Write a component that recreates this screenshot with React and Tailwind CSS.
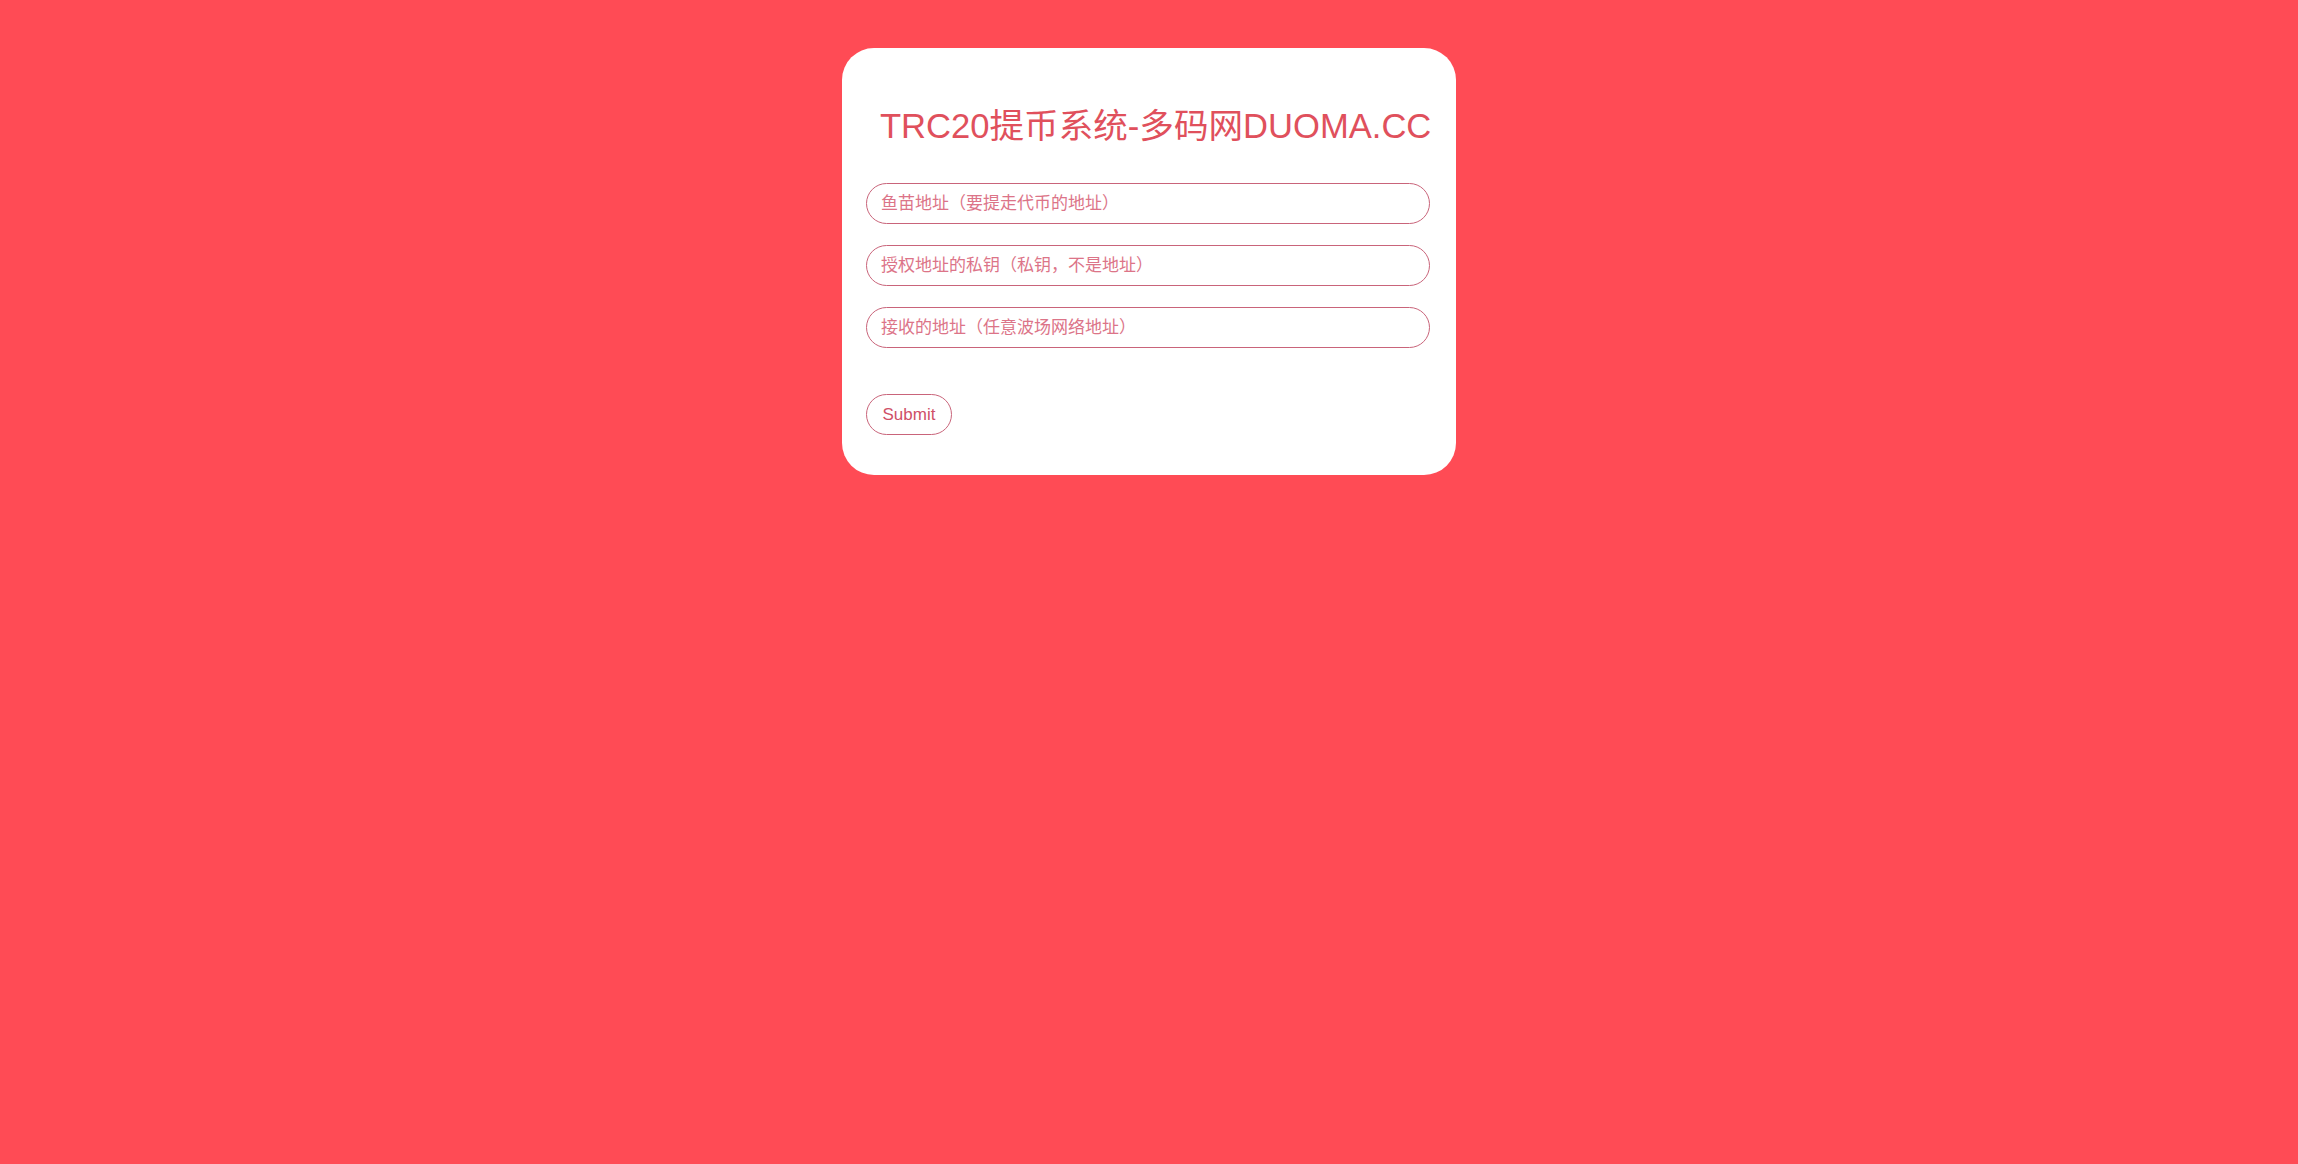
import React from "react";

const fields = [
  { name: "from", placeholder: "鱼苗地址（要提走代币的地址）" },
  { name: "key", placeholder: "授权地址的私钥（私钥，不是地址）" },
  { name: "to", placeholder: "接收的地址（任意波场网络地址）" },
];

const font = { fontFamily: '"Liberation Sans", "Noto Sans CJK SC", sans-serif' };

export default function App() {
  return (
    <div className="min-h-screen w-full bg-[#ff4b55] pt-[48px]" style={font}>
      <div className="mx-auto w-[614px] rounded-[32px] bg-white pl-[24px] pr-[26px] pt-[58px] pb-[40px]">
        <h1 className="pl-[14px] text-[34.6px] leading-[40px] font-normal text-[#e0505c] whitespace-nowrap">
          TRC20提币系统-多码网DUOMA.CC
        </h1>
        <form className="mt-[37px] flex flex-col gap-[21px]">
          {fields.map((f) => (
            <input
              key={f.name}
              type="text"
              name={f.name}
              placeholder={f.placeholder}
              className="h-[41px] w-full rounded-full border border-[#c9647a] bg-white px-[14px] text-[17px] text-[#c9506a] outline-none placeholder:text-[#dc7488]"
            />
          ))}
          <div className="mt-[25px]">
            <button
              type="submit"
              className="h-[41px] w-[86px] rounded-full border border-[#c9647a] bg-white text-[17px] text-[#cf5068]"
            >
              Submit
            </button>
          </div>
        </form>
      </div>
    </div>
  );
}
